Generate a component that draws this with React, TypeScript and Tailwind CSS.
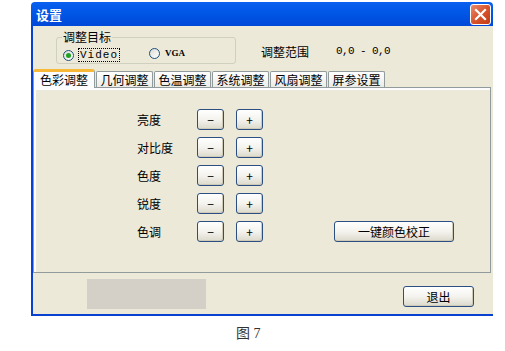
import React from "react";

const cjk = { fontFamily: '"Noto Sans CJK SC", "Noto Sans", sans-serif' };

function XPButton({ children, className = "" }: { children: React.ReactNode; className?: string }) {
  return (
    <div
      className={
        "flex items-center justify-center rounded-[3px] border border-[#2b4f82] bg-gradient-to-b from-[#ffffff] via-[#f4f3ee] to-[#dcd9cc] text-[12px] leading-none text-black shadow-[inset_-1px_-1px_0_#cfcab8] " +
        className
      }
      style={cjk}
    >
      {children}
    </div>
  );
}

function Row({ label }: { label: string }) {
  return (
    <div className="flex h-[21px] items-center">
      <div className="w-[60px] pl-[103px] box-content text-[12px] leading-none text-black" style={cjk}>
        {label}
      </div>
      <XPButton className="h-[21px] w-[27px]">−</XPButton>
      <div className="w-[12px]" />
      <XPButton className="h-[21px] w-[27px]">+</XPButton>
    </div>
  );
}

const tabs = ["几何调整", "色温调整", "系统调整", "风扇调整", "屏参设置"];

export default function App() {
  return (
    <div className="relative h-[351px] w-[505px] overflow-hidden bg-white" style={cjk}>
      <div className="ml-[31px] mt-[2px] flex h-[314px] w-[462px] flex-col">
        {/* Title bar */}
        <div className="flex h-[24px] items-center justify-between rounded-t-[4px] bg-gradient-to-b from-[#0a61f0] via-[#0055e5] to-[#0048d8] pl-[5px] pr-[2px]">
          <span className="text-[13px] font-bold leading-none text-white" style={cjk}>
            设置
          </span>
          <div className="flex h-[21px] w-[21px] items-center justify-center rounded-[3px] border border-white bg-gradient-to-br from-[#e98a6c] via-[#d9532b] to-[#c23b14]">
            <svg width="13" height="13" viewBox="0 0 13 13">
              <path d="M2 2 L11 11 M11 2 L2 11" stroke="white" strokeWidth="2.2" strokeLinecap="square" />
            </svg>
          </div>
        </div>
        {/* Body */}
        <div className="flex flex-1 flex-col border-b-2 border-l-2 border-[#0841d0] bg-[#ece9d8]">
          {/* Top section */}
          <div className="flex h-[44px] items-start">
            <div className="relative ml-[23px] mt-[11px] h-[27px] w-[180px] rounded-[3px] border border-[#d0d0bf]">
              <span className="absolute left-[5px] top-[-7px] bg-[#ece9d8] px-[1px] text-[12px] leading-none text-black" style={cjk}>
                调整目标
              </span>
              <div className="absolute left-[6px] top-[10px] flex items-center">
                <div className="flex h-[11px] w-[11px] items-center justify-center rounded-full border border-[#1c5180] bg-gradient-to-br from-[#dcdcd4] to-white">
                  <div className="h-[5px] w-[5px] rounded-full bg-[#21a121]" />
                </div>
                <span
                  className="ml-[4px] border border-dotted border-black px-[1px] text-[11px] leading-[12px] tracking-[1px] text-black"
                  style={{ fontFamily: '"Liberation Mono", monospace' }}
                >
                  Video
                </span>
              </div>
              <div className="absolute left-[92px] top-[10px] flex items-center">
                <div className="h-[11px] w-[11px] rounded-full border border-[#1c5180] bg-gradient-to-br from-[#dcdcd4] to-white" />
                <span
                  className="ml-[5px] text-[9px] font-bold leading-none text-black"
                  style={{ fontFamily: '"Liberation Serif", serif' }}
                >
                  VGA
                </span>
              </div>
            </div>
            <div className="ml-[25px] mt-[20px] text-[12px] leading-none text-black" style={cjk}>
              调整范围
            </div>
            <div
              className="ml-[27px] mt-[20px] text-[11px] leading-none tracking-[-0.6px] text-black"
              style={{ fontFamily: '"Liberation Mono", monospace' }}
            >
              0,0 - 0,0
            </div>
          </div>
          {/* Tabs */}
          <div className="flex h-[17px] items-end">
            <div className="relative z-10 -mb-px flex h-[19px] w-[62px] items-center justify-center rounded-t-[3px] border-x border-t-[3px] border-x-[#919b9c] border-t-[#f8b838] bg-[#fcfcfe] text-[12px] leading-none text-black" style={cjk}>
              色彩调整
            </div>
            {tabs.map((t) => (
              <div
                key={t}
                className="ml-[1px] flex h-[16px] w-[57px] items-center justify-center rounded-t-[2px] border-x border-t border-[#919b9c] bg-gradient-to-b from-white to-[#ecebe6] text-[12px] leading-none text-black"
                style={cjk}
              >
                {t}
              </div>
            ))}
          </div>
          {/* Panel */}
          <div className="mr-[2px] flex h-[186px] flex-col border border-[#919b9c] bg-[#ece9d8] shadow-[inset_2px_2px_0_#fcfcfe]">
            <div className="mt-[21px] flex flex-col gap-[7px]">
              <Row label="亮度" />
              <Row label="对比度" />
              <Row label="色度" />
              <Row label="锐度" />
              <div className="flex items-center">
                <Row label="色调" />
                <XPButton className="ml-[71px] h-[21px] w-[120px]">一键颜色校正</XPButton>
              </div>
            </div>
          </div>
          {/* Bottom */}
          <div className="flex flex-1 items-start">
            <div className="ml-[54px] mt-[6px] h-[30px] w-[119px] bg-[#d4d0c8]" />
            <XPButton className="ml-[197px] mt-[13px] h-[21px] w-[71px]">退出</XPButton>
          </div>
        </div>
      </div>
      <div
        className="absolute left-[236px] top-[327px] whitespace-pre text-[14px] leading-none text-[#333]"
        style={{ fontFamily: '"Liberation Serif", "Noto Sans CJK SC", serif' }}
      >
        图 7
      </div>
    </div>
  );
}
